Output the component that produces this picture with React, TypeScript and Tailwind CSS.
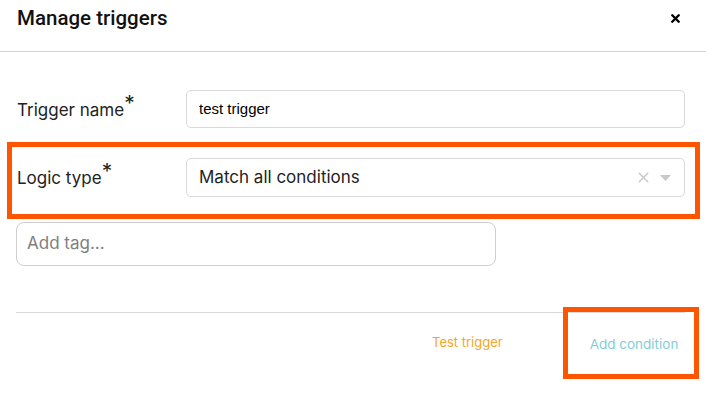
import { X } from 'lucide-react'

const label = 'font-["Inter",sans-serif] text-[17px] text-[#222]'

export default function App() {
  return (
    <div className="relative w-[706px] h-[400px] bg-white overflow-hidden">
      <div className="flex items-center justify-between h-[52px] border-b border-[#d4d4d4] pl-[17px] pr-[24px]">
        <h1 className='font-["Roboto",sans-serif] font-medium text-[20.5px] text-[#111] pb-[14px]'>
          Manage triggers
        </h1>
        <X className="w-[13px] h-[13px] mb-[14px] text-black" strokeWidth={4.5} />
      </div>

      <div className="pl-[16px]">
        <div className="flex items-center mt-[38px] h-[38px]">
          <div className={`w-[170px] pl-px pt-[3px] ${label}`}>
            Trigger name<sup className="text-[21px] -top-[5px]">*</sup>
          </div>
          <div className='flex items-center w-[499px] h-[38px] rounded-[5px] border border-[#d9d9d9] px-[12px] font-["Liberation_Sans",sans-serif] text-[15px] text-black'>
            test trigger
          </div>
        </div>

        <div className="flex items-center mt-[30px] h-[39px]">
          <div className={`w-[170px] pl-px pt-[3px] ${label}`}>
            Logic type<sup className="text-[21px] -top-[5px]">*</sup>
          </div>
          <div className='flex items-center justify-between w-[499px] h-[39px] rounded-[5px] border border-[#d9d9d9] pl-[12px] pr-[13px] font-["Inter",sans-serif] text-[17px] text-[#222]'>
            <span>Match all conditions</span>
            <div className="flex items-center gap-[8px] text-[#c8c8c8]">
              <X className="w-[17px] h-[17px]" strokeWidth={2} />
              <svg width="11" height="6" viewBox="0 0 11 6">
                <path d="M0 0h11L5.5 6z" fill="#c8c8c8" />
              </svg>
            </div>
          </div>
        </div>

        <div className='flex items-center mt-[25px] w-[480px] h-[44px] rounded-[8px] border border-[#cfcfcf] px-[10px] font-["Inter",sans-serif] text-[17px] text-[#808080]'>
          Add tag...
        </div>

        <div className="mt-[46px] w-[669px] border-t border-[#d9d9d9]" />

        <div className='flex items-start font-["Inter",sans-serif] text-[13px]'>
          <button className="ml-[416px] mt-[20px] text-[#f5a524]">Test trigger</button>
          <button className="ml-[87px] mt-[21px] text-[13.5px] text-[#7fcfd4]">Add condition</button>
        </div>
      </div>

      <div className="absolute left-[7px] top-[142px] w-[693px] h-[77px] border-[5px] border-[#ff5500]" />
      <div className="absolute left-[563px] top-[307px] w-[136px] h-[72px] border-[5px] border-[#ff5500]" />
    </div>
  )
}
